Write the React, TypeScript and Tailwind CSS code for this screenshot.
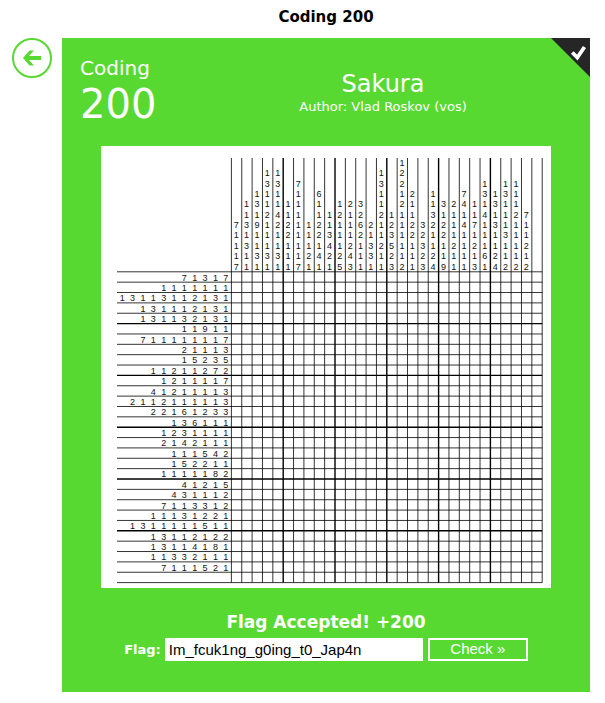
import { useState } from "react";

const CELL = 10.36;
const COUNT = 30;
const GRID_X = 130.4;
const GRID_Y = 125.8;
const GRID_END_X = GRID_X + CELL * COUNT;
const GRID_END_Y = GRID_Y + CELL * COUNT;

const columnClues = [
  "71117", "1131311", "13191131", "1311211131", "1311421131",
  "1122111", "711111117", "11121", "61122141", "113421",
  "1211125", "2111243", "3262111", "21331", "1311211211",
  "123523", "12212111112", "21122111", "32323", "11321124",
  "3122119", "2111211", "74141111", "1171213", "131411161",
  "13131124", "131113112", "111211112", "711212", "",
];

const rowClues = [
  "71317", "1111111", "13113112131", "131112131", "131132131",
  "11911", "711111117", "21113", "15235", "11211272",
  "1211117", "41211113", "2112111113", "22161233", "136111",
  "1231111", "2142111", "111542", "152211", "1111182",
  "41215", "431112", "7113312", "11131221", "1311111511",
  "13112122", "13114181", "11332111", "7111521", "",
];

function Nonogram() {
  const lines = Array.from({ length: COUNT + 1 }, (_, i) => i);
  return (
    <svg
      viewBox="0 0 450 442"
      role="img"
      aria-label="Nonogram puzzle"
      className="block h-auto w-full bg-white"
    >
      <g stroke="#000">
        {lines.map((i) => {
          const heavy = i > 0 && i < COUNT && i % 5 === 0;
          const x = GRID_X + i * CELL;
          const y = GRID_Y + i * CELL;
          return (
            <g key={i} strokeWidth={heavy ? 1.4 : 0.8}>
              <line x1={x} x2={x} y1={12} y2={GRID_END_Y} />
              <line x1={16} x2={GRID_END_X} y1={y} y2={y} />
            </g>
          );
        })}
      </g>
      <g
        fill="#111"
        textAnchor="middle"
        className="font-['Liberation_Sans',sans-serif] text-[9px]"
      >
        {columnClues.map((clue, c) =>
          clue.split("").map((digit, i) => (
            <text
              key={`c${c}-${i}`}
              x={GRID_X + c * CELL + 4.8}
              y={123.5 - (clue.length - 1 - i) * CELL}
            >
              {digit}
            </text>
          )),
        )}
        {rowClues.map((clue, r) =>
          clue.split("").map((digit, i) => (
            <text
              key={`r${r}-${i}`}
              x={124.8 - (clue.length - 1 - i) * CELL}
              y={GRID_Y + r * CELL + 8.8}
            >
              {digit}
            </text>
          )),
        )}
      </g>
    </svg>
  );
}

export default function App() {
  const [flag, setFlag] = useState("Im_fcuk1ng_g0ing_t0_Jap4n");

  return (
    <div className="bg-white pr-[15px] pb-3 pl-3 font-['DejaVu_Sans',Verdana,sans-serif]">
      <h1 className="pt-[7px] pb-[11px] pl-[50px] text-center text-[15px] leading-5 font-bold text-black">
        Coding 200
      </h1>
      <div className="flex items-start gap-2.5">
        <button
          type="button"
          aria-label="Back"
          className="flex size-10 shrink-0 items-center justify-center rounded-full border-2 border-[#58d932] bg-white text-[#58d932]"
        >
          <svg viewBox="0 0 18 16" className="h-4 w-[18px]" fill="currentColor">
            <path d="M6.5 0.5H11L6 6H18v4H6l5 5.5H6.5L0 8z" />
          </svg>
        </button>

        <main className="relative min-w-0 flex-1 bg-[#58d932] px-[18px] pb-[31px] text-white">
          <svg
            viewBox="0 0 39 39"
            role="img"
            aria-label="Solved"
            className="absolute top-0 right-0 size-[39px]"
          >
            <path d="M0 0h39v39z" fill="#262626" />
            <path d="M21.3 14.5l5 5L33.5 9" fill="none" stroke="#fff" strokeWidth="3.8" />
          </svg>

          <header className="flex h-[108px] pt-[18px]">
            <div className="w-[114px] shrink-0">
              <p className="text-xl leading-6">Coding</p>
              <p className="text-[40px] leading-[48px]">200</p>
            </div>
            <div className="flex-1 pt-3.5 text-center">
              <h2 className="text-2xl leading-7">Sakura</h2>
              <p className="text-[13px] leading-[18px]">Author: Vlad Roskov (vos)</p>
            </div>
          </header>

          <div className="mx-auto w-full max-w-[450px]">
            <Nonogram />
          </div>

          <p className="mt-[22px] text-center text-[17px] leading-6 font-bold">
            Flag Accepted! +200
          </p>
          <form
            className="mt-1 flex items-center justify-center"
            onSubmit={(e) => e.preventDefault()}
          >
            <label htmlFor="flag" className="mr-1 text-[13px] font-bold">
              Flag:
            </label>
            <input
              id="flag"
              type="text"
              value={flag}
              onChange={(e) => setFlag(e.target.value)}
              className="h-[23px] w-[258px] min-w-0 bg-white px-1 font-['Liberation_Sans',sans-serif] text-[15px] text-black outline-none"
            />
            <button
              type="submit"
              className="ml-[5px] flex h-[23px] w-[100px] items-center justify-center border-2 border-white font-['Liberation_Sans',sans-serif] text-[15px] text-white"
            >
              Check »
            </button>
          </form>
        </main>
      </div>
    </div>
  );
}
